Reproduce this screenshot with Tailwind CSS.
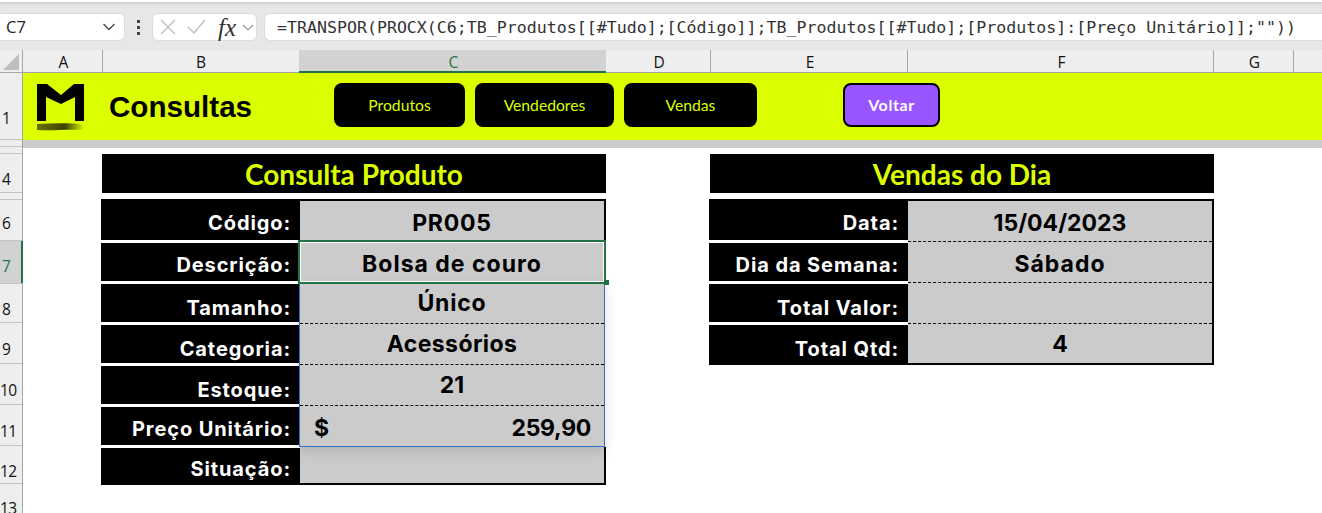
<!DOCTYPE html>
<html lang="pt-BR">

<head>
  <meta charset="UTF-8" />
  <title>Consultas</title>
  <script src="https://cdn.jsdelivr.net/npm/@tailwindcss/browser@4"></script>
</head>

<body class="bg-white w-[1322px] h-[513px] overflow-hidden font-['Inter',sans-serif]">

  <!-- formula bar -->
  <div class="h-[50px] bg-[#e6e7e9] border-t-[2px] border-white shadow-[inset_0_3px_3px_-1px_#cfcfcf] pt-[11px] flex items-start">
    <div class="w-[125px] h-[28px] bg-white rounded-r-md border-y border-r border-[#dcdcdc] flex items-center justify-between pl-[6px] pr-[8px]">
      <span class="font-['Open_Sans',sans-serif] text-[16.5px] text-[#222]">C7</span>
      <svg width="14" height="8" viewBox="0 0 14 8" fill="none" stroke="#444" stroke-width="1.3"><path d="M1.500 1 L7 6.500 L12.500 1" /></svg>
    </div>
    <div class="w-[27px] h-[28px] flex flex-col items-center justify-center gap-[3px]">
      <span class="w-[3px] h-[3px] bg-[#444]"></span>
      <span class="w-[3px] h-[3px] bg-[#444]"></span>
      <span class="w-[3px] h-[3px] bg-[#444]"></span>
    </div>
    <div class="w-[105px] h-[28px] bg-white rounded-md border border-[#dcdcdc] flex items-center pl-[7px] text-[#444]">
      <svg width="16" height="16" viewBox="0 0 16 16" fill="none" stroke="#bdbdbd" stroke-width="1.400"><path d="M1 1 L15 15 M15 1 L1 15" /></svg>
      <svg class="ml-[11px]" width="19" height="16" viewBox="0 0 19 16" fill="none" stroke="#bdbdbd" stroke-width="1.400"><path d="M1 8 L7 14 L18 1" /></svg>
      <span class="ml-[12px] font-['Liberation_Serif',serif] italic text-[25px] leading-none text-[#333]">fx</span>
      <svg class="ml-[6px]" width="12" height="7" viewBox="0 0 12 7" fill="none" stroke="#999" stroke-width="1.200"><path d="M1 1 L6 6 L11 1" /></svg>
    </div>
    <div class="ml-[7px] flex-1 h-[28px] bg-white rounded-l-md border-y border-l border-[#dcdcdc] flex items-center pl-[12px] pt-[2px] font-['DejaVu_Sans_Mono',monospace] text-[16.6px] text-[#333] whitespace-nowrap">=TRANSPOR(PROCX(C6;TB_Produtos[[#Tudo];[Código]];TB_Produtos[[#Tudo];[Produtos]:[Preço Unitário]];""))</div>
  </div>

  <!-- column headers -->
  <div class="flex h-[23px] bg-[#eeeeee] border-b border-[#a6a6a6] font-['Open_Sans',sans-serif] text-[15.5px] text-[#111] leading-[25px] text-center">
    <div class="w-[23px] border-r border-[#a6a6a6] relative overflow-hidden">
      <svg class="absolute left-[3px] top-[4px]" width="16" height="16" viewBox="0 0 16 16"><path d="M16 0 V16 H0 Z" fill="#bdbdbd" /></svg>
    </div>
    <div class="w-[80px] border-r border-[#a6a6a6] pl-[2px]">A</div>
    <div class="w-[196px]">B</div>
    <div class="w-[307px] bg-[#d2d2d2] border-b-[2px] border-[#217346] text-[#217346] h-[23px] pl-[2px]">C</div>
    <div class="w-[105px] border-r border-[#a6a6a6] pl-[2px]">D</div>
    <div class="w-[197px] border-r border-[#a6a6a6] pl-[2px]">E</div>
    <div class="w-[306px] border-r border-[#a6a6a6] pl-[2px]">F</div>
    <div class="w-[80px] border-r border-[#a6a6a6] pl-[2px]">G</div>
  </div>

  <div class="flex">
    <!-- row headers -->
    <div class="w-[23px] bg-[#eeeeee] border-r border-[#a6a6a6] font-['Open_Sans',sans-serif] text-[15.5px] text-[#111] flex flex-col">
      <div class="h-[67px] border-b border-[#c4c4c4] flex items-end pb-[9px] pl-[2px]">1</div>
      <div class="h-[7px] border-b border-[#c4c4c4]"></div>
      <div class="h-[7px] border-b border-[#c4c4c4]"></div>
      <div class="h-[39px] border-b border-[#c4c4c4] flex items-end pb-[1px] pl-[2px]">4</div>
      <div class="h-[7px] border-b border-[#c4c4c4]"></div>
      <div class="h-[41px] border-b border-[#c4c4c4] flex items-end pb-[5px] pl-[2px]">6</div>
      <div class="h-[42px] -mr-px bg-[#d2d2d2] border-r-[2px] border-[#217346] text-[#217346] flex items-end pb-[5px] pl-[2px]">7</div>
      <div class="h-[40px] border-y border-[#c4c4c4] flex items-end pb-[1px] pl-[2px]">8</div>
      <div class="h-[41px] border-b border-[#c4c4c4] flex items-end pb-[2px] pl-[2px]">9</div>
      <div class="h-[41px] border-b border-[#c4c4c4] flex items-end pb-[2px] tracking-[-0.5px]">10</div>
      <div class="h-[41px] border-b border-[#c4c4c4] flex items-end pb-[2px] tracking-[-0.5px]">11</div>
      <div class="h-[38px] border-b border-[#c4c4c4] flex items-end tracking-[-0.5px]">12</div>
      <div class="h-[29px] pt-[13px] tracking-[-0.5px]">13</div>
    </div>

    <div class="flex-1">
      <!-- banner -->
      <div class="h-[67px] bg-[#dcff00] flex items-start pl-[14px] pt-[10px]">
        <svg class="mt-px" width="50" height="48" viewBox="0 0 50 48">
          <defs>
            <linearGradient id="brush" x1="0" x2="1" y1="0" y2="0">
              <stop offset="0" stop-color="#6a7000" />
              <stop offset="0.6" stop-color="#3d4000" />
              <stop offset="1" stop-color="#dcff00" />
            </linearGradient>
          </defs>
          <path d="M0 0 H10 L24 11 L37 0 H47 V37 H38 V13 L24 20 L9 13 V37 H0 Z" fill="#000" />
          <path d="M0 40 C16 39 34 39 47 40 L47 46 C30 45 14 47 0 46 Z" fill="url(#brush)" />
        </svg>
        <span class="ml-[22px] mt-[6px] font-['Liberation_Sans',sans-serif] font-bold text-[29.6px] leading-[36px] text-black w-[225px]">Consultas</span>
        <div class="flex gap-[10px] font-['Lato',sans-serif] text-[15.7px] text-[#dcff00]">
          <div class="w-[131px] h-[44px] bg-black rounded-lg flex items-center justify-center pt-[2px]">Produtos</div>
          <div class="w-[139px] h-[44px] bg-black rounded-lg flex items-center justify-center pt-[2px]">Vendedores</div>
          <div class="w-[133px] h-[44px] bg-black rounded-lg flex items-center justify-center pt-[2px]">Vendas</div>
        </div>
        <div class="ml-[86px] w-[97px] h-[44px] bg-[#9955ff] border-[2px] border-black rounded-lg flex items-center justify-center font-['Lato',sans-serif] font-bold text-[16px] tracking-[0.6px] text-white">Voltar</div>
      </div>
      <div class="h-[8px] bg-[#cbcbcb]"></div>

      <!-- sheet -->
      <div class="flex pl-[78px] pt-[6px] gap-[103px]">

        <!-- consulta produto -->
        <div class="w-[505px] relative">
          <div class="ml-px h-[39px] bg-black flex items-center justify-center font-['Lato',sans-serif] font-bold text-[28px] text-[#dcff00]">Consulta Produto</div>
          <div class="mt-[6px] flex">
            <div class="w-[199px] flex flex-col text-white font-bold text-[20px] leading-none tracking-[0.9px]">
              <div class="h-[41px] mb-[3px] bg-black flex items-end justify-end pb-[7px] pr-[9px]">Código:</div>
              <div class="h-[38px] mb-[3px] bg-black flex items-end justify-end pb-[6px] pr-[9px]">Descrição:</div>
              <div class="h-[38px] mb-[3px] bg-black flex items-end justify-end pb-[4px] pr-[9px]">Tamanho:</div>
              <div class="h-[38px] mb-[3px] bg-black flex items-end justify-end pb-[4px] pr-[9px]">Categoria:</div>
              <div class="h-[38px] mb-[3px] bg-black flex items-end justify-end pb-[4px] pr-[9px]">Estoque:</div>
              <div class="h-[38px] mb-[3px] bg-black flex items-end justify-end pb-[6px] pr-[9px]">Preço Unitário:</div>
              <div class="h-[37px] bg-black flex items-end justify-end pb-[6px] pr-[9px]">Situação:</div>
            </div>
            <div class="w-[306px] border-y-[2px] border-r-[2px] border-black bg-[#cbcbcb] font-bold text-[23px] text-black flex flex-col">
              <div class="h-[41px] border-b border-dashed border-black flex items-center justify-center pt-[4px] tracking-[0.8px]">PR005</div>
              <div class="h-[41px] border-b border-dashed border-black flex items-center justify-center pt-[4px] tracking-[1px]">Bolsa de couro</div>
              <div class="h-[41px] border-b border-dashed border-black flex items-center justify-center tracking-[0.8px]">Único</div>
              <div class="h-[41px] border-b border-dashed border-black flex items-center justify-center tracking-[0.4px]">Acessórios</div>
              <div class="h-[41px] border-b border-dashed border-black flex items-center justify-center">21</div>
              <div class="h-[41px] flex items-center justify-between pt-[4px] pl-[14px] pr-[13px]"><span>$</span><span class="tracking-[-0.3px]">259,90</span></div>
              <div class="h-[36px]"></div>
            </div>
          </div>
          <!-- spill range and active cell -->
          <div class="absolute left-[198px] top-[129px] w-[306px] h-[164px] border border-[#2f6fd0] shadow-[0_4px_12px_rgba(0,0,0,0.12)]">
            <div class="absolute -right-[2px] -top-px w-px h-[164px] bg-[#f2f2f2]"></div>
          </div>
          <div class="absolute left-[197px] top-[86px] w-[308px] h-[44px] border-[2px] border-[#217346] outline outline-white -outline-offset-3"></div>
          <div class="absolute left-[503px] top-[126px] w-[5px] h-[5px] bg-[#217346]"></div>
        </div>

        <!-- vendas do dia -->
        <div class="w-[505px]">
          <div class="ml-px h-[39px] bg-black flex items-center justify-center font-['Lato',sans-serif] font-bold text-[28px] text-[#dcff00]">Vendas do Dia</div>
          <div class="mt-[6px] flex">
            <div class="w-[199px] flex flex-col text-white font-bold text-[20px] leading-none tracking-[0.9px]">
              <div class="h-[41px] mb-[3px] bg-black flex items-end justify-end pb-[7px] pr-[9px]">Data:</div>
              <div class="h-[38px] mb-[3px] bg-black flex items-end justify-end pb-[6px] pr-[9px]">Dia da Semana:</div>
              <div class="h-[38px] mb-[3px] bg-black flex items-end justify-end pb-[4px] pr-[9px]">Total Valor:</div>
              <div class="h-[40px] bg-black flex items-end justify-end pb-[6px] pr-[9px]">Total Qtd:</div>
            </div>
            <div class="w-[306px] border-y-[2px] border-r-[2px] border-black bg-[#cbcbcb] font-bold text-[23px] text-black flex flex-col">
              <div class="h-[41px] border-b border-dashed border-black flex items-center justify-center pt-[4px]">15/04/2023</div>
              <div class="h-[41px] border-b border-dashed border-black flex items-center justify-center pt-[4px] tracking-[1px]">Sábado</div>
              <div class="h-[41px] border-b border-dashed border-black"></div>
              <div class="h-[39px] flex items-center justify-center pt-[2px]">4</div>
            </div>
          </div>
        </div>

      </div>
    </div>
  </div>

</body>

</html>
